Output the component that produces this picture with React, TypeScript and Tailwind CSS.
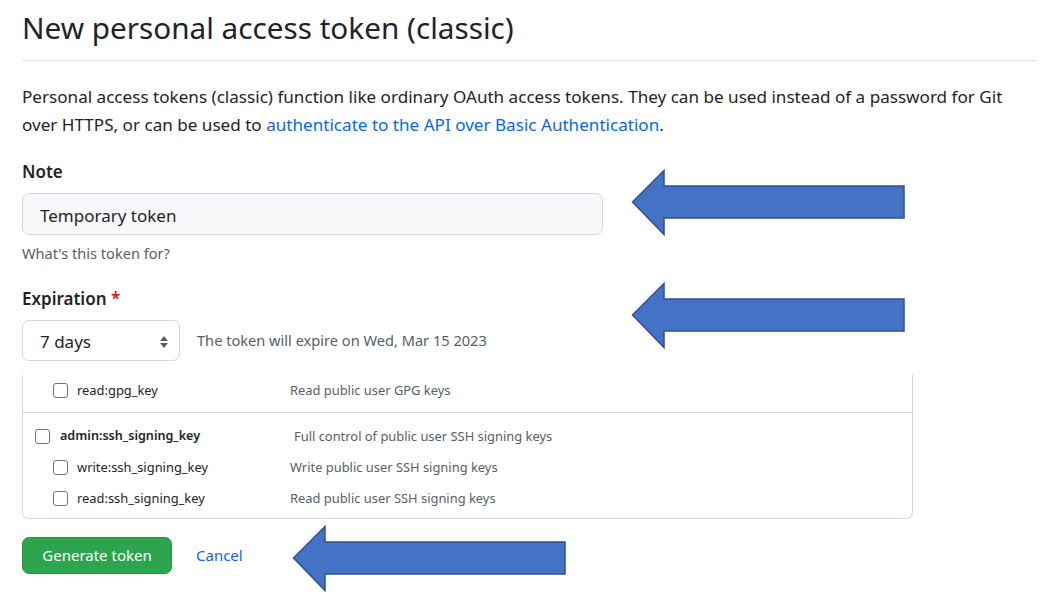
import React from "react";

type Scope = { name: string; desc: string; child?: boolean };

const sshScopes: Scope[] = [
  { name: "admin:ssh_signing_key", desc: "Full control of public user SSH signing keys" },
  { name: "write:ssh_signing_key", desc: "Write public user SSH signing keys", child: true },
  { name: "read:ssh_signing_key", desc: "Read public user SSH signing keys", child: true },
];

function Checkbox() {
  return <span className="inline-block w-[15px] h-[15px] shrink-0 rounded-[3px] border border-[#6e7781] bg-white" />;
}

function ScopeRow({ scope }: { scope: Scope }) {
  return (
    <div className="flex items-center h-[31px]">
      <div className={scope.child ? "flex items-center w-[267px] pl-[30px] gap-[9px]" : "flex items-center w-[271px] pl-[12px] gap-[10px]"}>
        <Checkbox />
        <span className={scope.child ? "text-[#1f2328]" : "font-semibold text-[12.6px] text-[#1f2328]"}>{scope.name}</span>
      </div>
      <span className="text-[#57606a]">{scope.desc}</span>
    </div>
  );
}

function Arrow({ className }: { className: string }) {
  // block arrow pointing left, like the office shape in the screenshot
  return (
    <svg className={className} width="276" height="67" viewBox="0 0 276 67" fill="none">
      <polygon
        points="1.5,33 33,1.5 33,17 273,17 273,49 33,49 33,65.5"
        fill="#4472c4"
        stroke="#2f528f"
        strokeWidth="1.5"
        strokeLinejoin="miter"
      />
    </svg>
  );
}

export default function App() {
  return (
    <div className="relative w-[1047px] h-[598px] overflow-hidden bg-white text-[#1f2328] font-['Segoe_UI','Noto_Sans',sans-serif]">
      <div className="pl-[22px] pr-[12px]">
        <h1 className="pt-[8px] pb-[12px] text-[29.7px] leading-[40px] font-normal border-b border-[#d8dee4]">
          New personal access token (classic)
        </h1>

        <p className="mt-[22px] text-[17.1px] leading-[28px] whitespace-nowrap">
          Personal access tokens (classic) function like ordinary OAuth access tokens. They can be used instead of a password for Git
          <br />
          over HTTPS, or can be used to{" "}
          <a href="#" className="text-[#0969da]">authenticate to the API over Basic Authentication</a>.
        </p>

        <label className="block mt-[21px] text-[17px] leading-[24px] font-semibold">Note</label>
        <div className="mt-[9px] w-[581px] h-[42px] flex items-center px-[17px] pt-[3px] rounded-[7px] border border-[#d0d7de] bg-[#f6f8fa] text-[17px]">
          Temporary token
        </div>
        <p className="mt-[8px] text-[14.6px] leading-[20px] text-[#57606a]">What's this token for?</p>

        <label className="block mt-[24px] text-[17px] leading-[24px] font-semibold">
          Expiration <span className="text-[#cf222e]">*</span>
        </label>
        <div className="mt-[9px] flex items-center">
          <div className="w-[158px] h-[41px] flex items-center justify-between pl-[17px] pr-[10px] pt-[2px] rounded-[7px] border border-[#d0d7de] bg-white text-[17px]">
            <span>7 days</span>
            <svg width="10" height="14" viewBox="0 0 10 14" fill="#57606a">
              <path d="M5 1 L9 6 H1 Z" />
              <path d="M5 13 L9 8 H1 Z" />
            </svg>
          </div>
          <span className="ml-[17px] text-[14.6px] text-[#57606a]">The token will expire on Wed, Mar 15 2023</span>
        </div>

        <div className="mt-[14px] w-[891px] border-x border-b border-[#d0d7de] rounded-b-[7px] text-[12.9px]">
          <div className="pb-[5px]">
            <div className="flex items-center h-[32px]">
              <div className="flex items-center w-[267px] pl-[30px] gap-[9px]">
                <Checkbox />
                <span>read:gpg_key</span>
              </div>
              <span className="text-[#57606a]">Read public user GPG keys</span>
            </div>
          </div>
          <div className="border-t border-[#d0d7de] pt-[8px] pb-[4px]">
            {sshScopes.map((s) => (
              <ScopeRow key={s.name} scope={s} />
            ))}
          </div>
        </div>

        <div className="mt-[18px] flex items-center">
          <button className="w-[150px] h-[37px] rounded-[7px] bg-[#2da44e] border border-[#2a9147] text-white text-[15px]">
            Generate token
          </button>
          <a href="#" className="ml-[24px] text-[15px] text-[#0969da]">Cancel</a>
        </div>
      </div>

      <Arrow className="absolute left-[631px] top-[169px]" />
      <Arrow className="absolute left-[631px] top-[282px]" />
      <Arrow className="absolute left-[292px] top-[525px] w-[276px]" />
    </div>
  );
}
